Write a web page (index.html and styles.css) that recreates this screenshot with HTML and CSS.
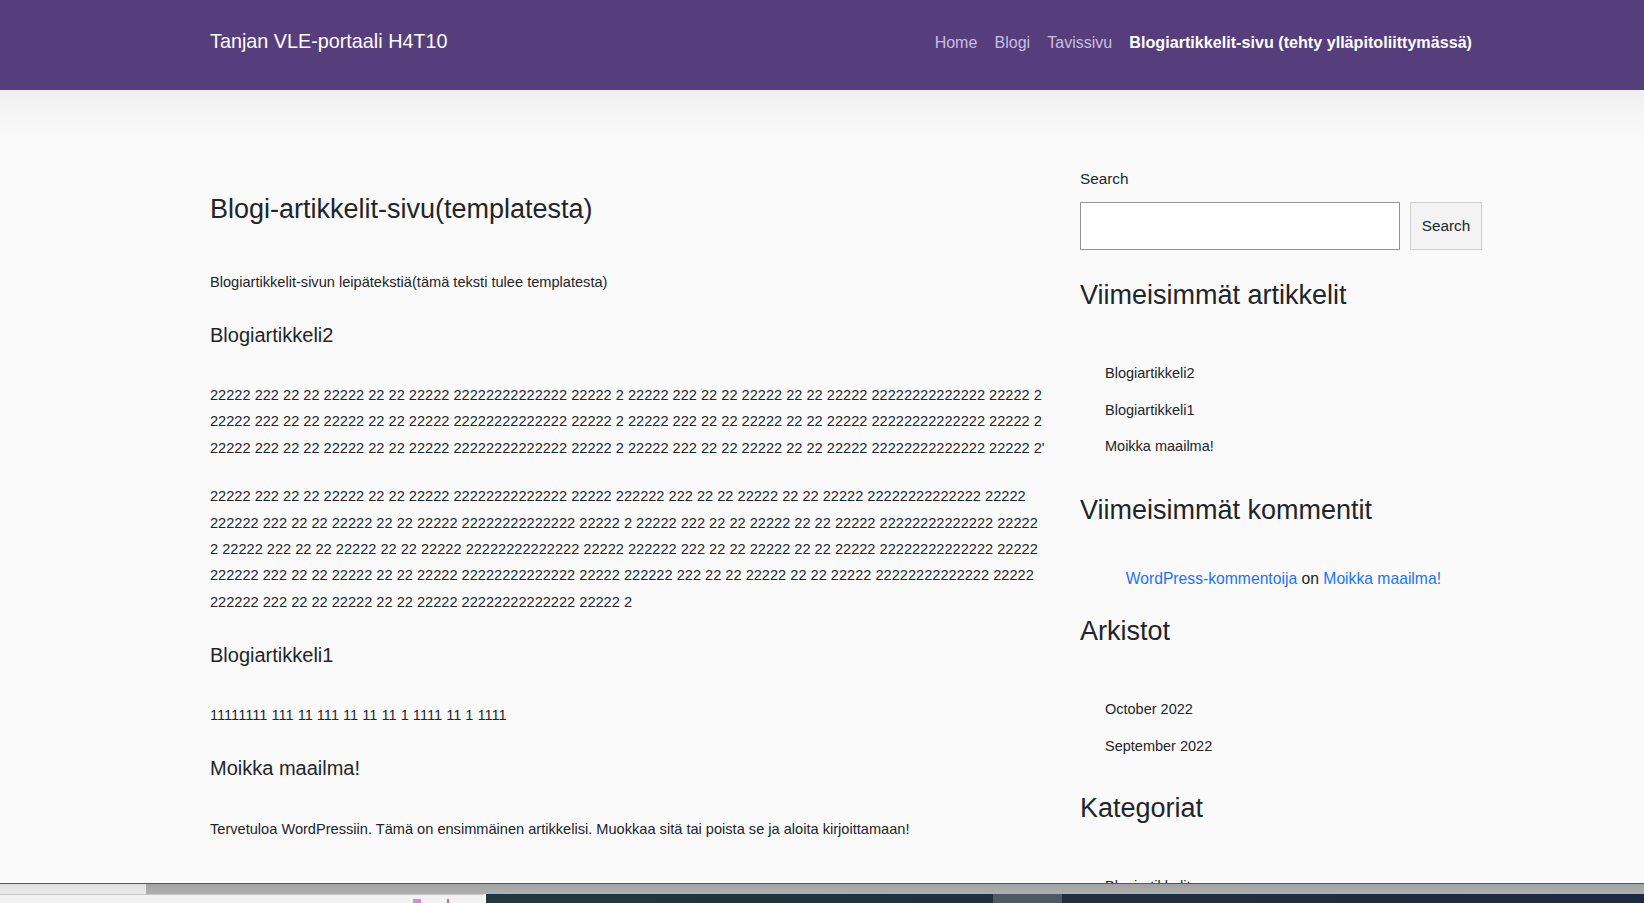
FILE: index.html
```html
<!DOCTYPE html>
<html lang="fi">
<head>
<meta charset="utf-8">
<title>Blogi-artikkelit-sivu(templatesta) – Tanjan VLE-portaali H4T10</title>
<link rel="stylesheet" href="styles.css">
</head>
<body>
<header class="site-header">
  <div class="container header-inner">
    <a class="site-title" href="#">Tanjan VLE-portaali H4T10</a>
    <nav class="main-nav">
      <a href="#">Home</a>
      <a href="#">Blogi</a>
      <a href="#">Tavissivu</a>
      <a href="#" class="active">Blogiartikkelit-sivu (tehty ylläpitoliittymässä)</a>
    </nav>
  </div>
</header>

<div class="page">
  <div class="container layout">
    <main class="content">
      <h1 class="page-title">Blogi-artikkelit-sivu(templatesta)</h1>
      <p>Blogiartikkelit-sivun leipätekstiä(tämä teksti tulee templatesta)</p>

      <h2 class="post-title">Blogiartikkeli2</h2>
      <p>22222 222 22 22 22222 22 22 22222 22222222222222 22222 2 22222 222 22 22 22222 22 22 22222 22222222222222 22222 2 22222 222 22 22 22222 22 22 22222 22222222222222 22222 2 22222 222 22 22 22222 22 22 22222 22222222222222 22222 2 22222 222 22 22 22222 22 22 22222 22222222222222 22222 2 22222 222 22 22 22222 22 22 22222 22222222222222 22222 2'</p>
      <p>22222 222 22 22 22222 22 22 22222 22222222222222 22222 222222 222 22 22 22222 22 22 22222 22222222222222 22222 222222 222 22 22 22222 22 22 22222 22222222222222 22222 2 22222 222 22 22 22222 22 22 22222 22222222222222 22222 2 22222 222 22 22 22222 22 22 22222 22222222222222 22222 222222 222 22 22 22222 22 22 22222 22222222222222 22222 222222 222 22 22 22222 22 22 22222 22222222222222 22222 222222 222 22 22 22222 22 22 22222 22222222222222 22222 222222 222 22 22 22222 22 22 22222 22222222222222 22222 2</p>

      <h2 class="post-title">Blogiartikkeli1</h2>
      <p>11111111 111 11 111 11 11 11 1 1111 11 1 1111</p>

      <h2 class="post-title">Moikka maailma!</h2>
      <p>Tervetuloa WordPressiin. Tämä on ensimmäinen artikkelisi. Muokkaa sitä tai poista se ja aloita kirjoittamaan!</p>
    </main>

    <aside class="sidebar">
      <section class="widget widget-search">
        <label class="search-label" for="s">Search</label>
        <div class="search-row">
          <input id="s" class="search-input" type="text">
          <button class="search-button" type="button">Search</button>
        </div>
      </section>

      <section class="widget">
        <h2 class="widget-title">Viimeisimmät artikkelit</h2>
        <ul class="widget-list">
          <li><a href="#">Blogiartikkeli2</a></li>
          <li><a href="#">Blogiartikkeli1</a></li>
          <li><a href="#">Moikka maailma!</a></li>
        </ul>
      </section>

      <section class="widget">
        <h2 class="widget-title">Viimeisimmät kommentit</h2>
        <ul class="comment-list">
          <li><a href="#" class="link">WordPress-kommentoija</a> on <a href="#" class="link">Moikka maailma!</a></li>
        </ul>
      </section>

      <section class="widget widget-after-comments">
        <h2 class="widget-title">Arkistot</h2>
        <ul class="widget-list">
          <li><a href="#">October 2022</a></li>
          <li><a href="#">September 2022</a></li>
        </ul>
      </section>

      <section class="widget widget-last">
        <h2 class="widget-title">Kategoriat</h2>
        <ul class="widget-list">
          <li><a href="#">Blogiartikkelit</a></li>
          <li><a href="#">Uncategorized</a></li>
        </ul>
      </section>
    </aside>
  </div>
</div>

<div class="screen-bottom">
  <div class="scroll-track">
    <div class="scroll-light"></div>
  </div>
  <div class="taskbar">
    <div class="tb-left"><span class="tb-mark pink"></span><span class="tb-mark orange"></span></div>
    <div class="tb-teal"></div>
    <div class="tb-slate"></div>
    <div class="tb-navy"></div>
  </div>
</div>
</body>
</html>
```

FILE: styles.css
```css
html {
  overflow: hidden;
}

body {
  margin: 0;
  background: #fafafa;
  color: #212529;
  font-family: "Liberation Sans", Arial, sans-serif;
}

a {
  color: inherit;
  text-decoration: none;
}

.container {
  max-width: 1320px;
  margin: 0 auto;
  padding-left: 48px;
  box-sizing: border-box;
}

/* Header */
.site-header {
  background: #563d7c;
  height: 90px;
  box-sizing: border-box;
  padding-top: 29.4px;
}

.header-inner {
  display: flex;
  align-items: baseline;
  justify-content: space-between;
}

.site-title {
  color: #ffffff;
  font-size: 19.8px;
  line-height: 24px;
}

.main-nav {
  display: flex;
  align-items: baseline;
  gap: 17.2px;
  padding-right: 10px;
  font-size: 16px;
  line-height: 24px;
}

.main-nav a {
  color: #cbbde2;
}

.main-nav a.active {
  color: #ffffff;
  font-weight: bold;
  font-size: 16.15px;
}

/* Page */
.page {
  background: linear-gradient(to bottom, #efefef 0, #f6f6f6 25px, #fafafa 60px);
}

.layout {
  display: grid;
  grid-template-columns: 837px 402px;
  column-gap: 33px;
  align-items: start;
}

.content {
  padding-top: 103px;
}

.page-title {
  font-size: 27px;
  line-height: 32px;
  font-weight: normal;
  margin: 0 0 43.5px;
}

.content p {
  font-size: 14.6px;
  line-height: 26.3px;
  margin: 0 0 22.5px;
}

.post-title {
  font-size: 20px;
  line-height: 24px;
  font-weight: normal;
  margin: 28px 0 35.2px;
}

/* Sidebar */
.sidebar {
  padding-top: 77.2px;
}

.search-label {
  display: block;
  font-size: 15.3px;
  line-height: 23px;
}

.search-row {
  display: flex;
  gap: 10px;
  margin-top: 12px;
  height: 48px;
}

.search-input {
  flex: 1;
  min-width: 0;
  box-sizing: border-box;
  height: 48px;
  margin: 0;
  border: 1px solid #949494;
  background: #ffffff;
  font-family: inherit;
  font-size: 15.3px;
  padding: 0 10px;
}

.search-button {
  width: 72px;
  height: 48px;
  box-sizing: border-box;
  margin: 0;
  padding: 0;
  border: 1px solid #d0d0d0;
  background: #f3f3f3;
  color: #212529;
  font-family: inherit;
  font-size: 15.3px;
}

.widget-title {
  font-size: 27px;
  line-height: 32px;
  font-weight: normal;
  margin: 0;
}

.widget + .widget {
  margin-top: 35px;
}

.widget-search + .widget {
  margin-top: 29.1px;
}

.widget.widget-after-comments {
  margin-top: 23.7px;
}

.widget.widget-last {
  margin-top: 33.5px;
}

.widget-list {
  list-style: none;
  margin: 48.8px 0 0;
  padding-left: 25px;
  font-size: 14.5px;
  line-height: 26px;
}

.widget-list li + li {
  margin-top: 10.7px;
}

.comment-list {
  list-style: none;
  margin: 39.1px 0 0;
  padding-left: 45.7px;
  font-size: 15.7px;
  line-height: 26px;
}

.comment-list .link {
  color: #1a73f5;
}

/* Bottom screen overlay (scrollbar + taskbar strip) */
.screen-bottom {
  position: fixed;
  left: 0;
  right: 0;
  bottom: 0;
  height: 20px;
  display: flex;
  flex-direction: column;
}

.scroll-track {
  height: 10px;
  border-top: 1px solid #595959;
  background: linear-gradient(to bottom, #a3a3a3, #b0b0b0);
  display: flex;
}

.scroll-light {
  width: 146px;
  background: linear-gradient(to bottom, #e0e0e0, #ececec);
}

.taskbar {
  flex: 1;
  display: flex;
}

.tb-left {
  width: 484px;
  background: #f2f2f2;
  border-top: 1px solid #c6c6c6;
  position: relative;
  margin-right: 1.5px;
}

.tb-mark {
  position: absolute;
  top: 4px;
  height: 6px;
}

.tb-mark.pink {
  left: 413px;
  width: 8px;
  background: #e77ef0;
}

.tb-mark.orange {
  left: 447px;
  width: 2px;
  background: #e0701e;
}

.tb-teal {
  width: 507.5px;
  background: linear-gradient(to right, #203840, #1f3040);
}

.tb-slate {
  width: 69px;
  background: #4b5a66;
}

.tb-navy {
  flex: 1;
  background: linear-gradient(to right, #1f2f40, #1d2a44);
}
```
